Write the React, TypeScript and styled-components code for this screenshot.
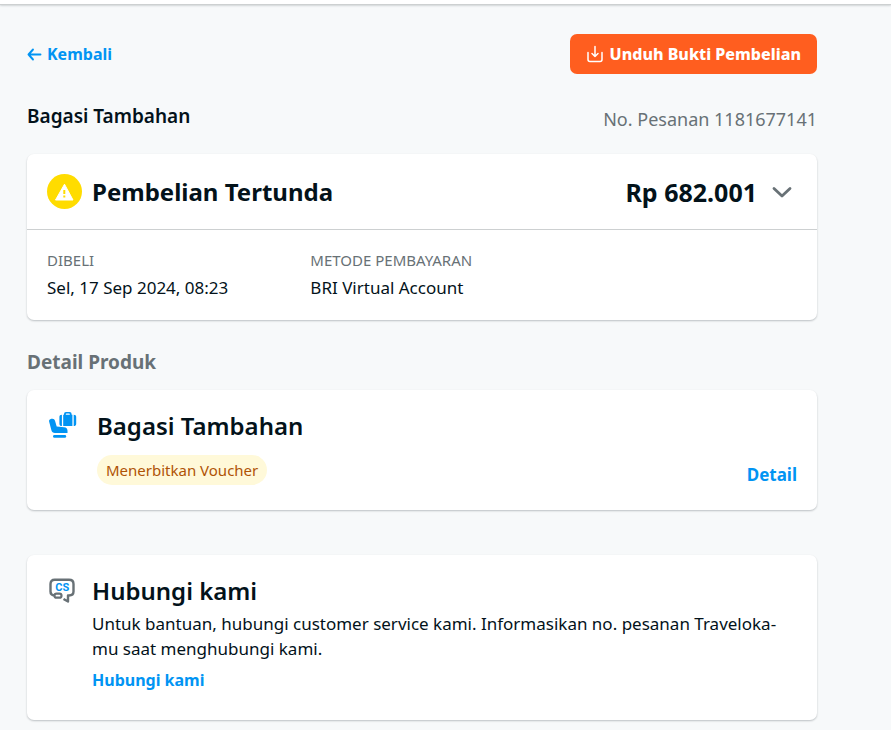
import React from "react";
import styled, { createGlobalStyle } from "styled-components";

const GlobalStyle = createGlobalStyle`
  * { box-sizing: border-box; }
  body {
    margin: 0;
    background: #f7f9fa;
    color: #03121a;
    font-family: "Noto Sans", "Open Sans", sans-serif;
    font-size: 17px;
    line-height: 24px;
  }
  h1, h2, h3, p, dl, dt, dd { margin: 0; }
  svg { display: block; flex: none; }
`;

const TopBar = styled.header`
  height: 5px;
  background: #fff;
  border-bottom: 1px solid #cdd0d1;
  box-shadow: 0 1px 2px rgba(3, 18, 26, 0.15);
`;

const Page = styled.main`
  padding: 29px 74px 10px 27px;
`;

const Row = styled.div`
  display: flex;
  align-items: center;
  justify-content: space-between;
`;

const Link = styled.a`
  display: inline-flex;
  align-items: center;
  gap: 4px;
  color: #0194f3;
  font-size: 16px;
  font-weight: 700;
  text-decoration: none;
`;

const DownloadButton = styled.button`
  display: flex;
  align-items: center;
  gap: 6px;
  height: 40px;
  padding: 0 16px;
  border: 0;
  border-radius: 7px;
  background: #ff5e1f;
  color: #fff;
  font: 800 16px/24px "Noto Sans", "Open Sans", sans-serif;
  cursor: pointer;
`;

const OrderRow = styled(Row)`
  align-items: flex-start;
  margin-top: 28px;
  height: 32px;
`;

const Heading = styled.h1`
  font-size: 19px;
  line-height: 28px;
  font-weight: 600;
`;

const OrderNumber = styled.p`
  padding-top: 3px;
  color: #687176;
  font-size: 18px;
  line-height: 28px;
`;

const SectionTitle = styled.h2`
  margin: 28px 0 14px;
  color: #687176;
  font-size: 19px;
  line-height: 28px;
  font-weight: 700;
`;

const Card = styled.section`
  border-radius: 7px;
  background: #fff;
  box-shadow: 0 1px 2px rgba(3, 18, 26, 0.24);
`;

const PaymentCard = styled(Card)`
  margin-top: 20px;
`;

const CardTitle = styled.h2<{ $strong?: boolean }>`
  font-size: 24px;
  line-height: 32px;
  font-weight: ${(p) => (p.$strong ? 700 : 600)};
`;

const StatusHeader = styled(Row)`
  height: 76px;
  padding: 0 20px;
  border-bottom: 1px solid #cdd0d1;
`;

const Status = styled.div`
  display: flex;
  align-items: center;
  gap: 10px;
`;

const PriceToggle = styled.button`
  display: flex;
  align-items: center;
  gap: 10px;
  padding: 0;
  border: 0;
  background: none;
  color: inherit;
  font: 700 25px/32px "Noto Sans", "Open Sans", sans-serif;
  cursor: pointer;
`;

const Facts = styled.dl`
  display: grid;
  grid-template-columns: 1fr 2fr;
  column-gap: 20px;
  padding: 20px 20px 18px;
`;

const FactLabel = styled.dt`
  color: #687176;
  font-size: 15px;
  line-height: 20px;
`;

const FactValue = styled.dd`
  padding-top: 4px;
  line-height: 28px;
`;

const ProductCard = styled(Card)`
  display: flex;
  gap: 20px;
  padding: 20px 20px 23px;
`;

const ProductBody = styled.div`
  flex: 1;
  padding-bottom: 2px;
`;

const Badge = styled.span`
  display: inline-block;
  margin-top: 13px;
  padding: 0 9px;
  border-radius: 15px;
  background: #fff9d9;
  color: #af5305;
  font-size: 15px;
  line-height: 30px;
`;

const DetailLink = styled(Link)`
  align-self: flex-end;
  font-size: 17px;
`;

const ContactCard = styled(Card)`
  display: flex;
  gap: 15px;
  margin-top: 45px;
  padding: 20px 20px 28px;
`;

const ContactText = styled.p`
  margin: 4px 0 7px;
  padding-right: 12px;
  line-height: 25px;
`;

const BackIcon = () => (
  <svg width="16" height="16" viewBox="0 0 16 16" fill="none" stroke="#0194f3" strokeWidth="1.9" strokeLinecap="round" strokeLinejoin="round" aria-hidden="true">
    <path d="M6 3.5 1.5 8.5 6 13.5M1.5 8.5H13.5" />
  </svg>
);

const DownloadIcon = () => (
  <svg width="18" height="18" viewBox="0 0 18 18" fill="none" stroke="#fff" strokeWidth="1.5" strokeLinecap="round" strokeLinejoin="round" aria-hidden="true">
    <path d="M2 7.5V14.5Q2 16.5 4 16.5H14Q16 16.5 16 14.5V7.5M9 1.5V11.5M6 8.5 9 11.5 12 8.5" />
  </svg>
);

const WarningIcon = () => (
  <svg width="35" height="35" viewBox="0 0 35 35" aria-hidden="true">
    <circle cx="17.5" cy="17.5" r="17.5" fill="#ffdc00" />
    <path d="M17.5 10.2 26 26H8.5Z" fill="#fff" stroke="#fff" strokeWidth="1" strokeLinejoin="round" />
    <path d="M17.3 16V20M17.3 21.5V23.5" stroke="#ffdc00" strokeWidth="2" />
  </svg>
);

const ChevronIcon = () => (
  <svg width="30" height="24" viewBox="0 0 30 24" fill="none" stroke="#687176" strokeWidth="2.8" strokeLinecap="round" strokeLinejoin="round" aria-hidden="true">
    <path d="M7 8.5 15 16 23 8.5" />
  </svg>
);

const BaggageIcon = () => (
  <svg width="30" height="30" viewBox="0 0 30 30" fill="#0194f3" aria-hidden="true">
    <path d="M4.3 8.8C6.2 8.3 7.5 9 8 10.8L9.7 16.6 17 17.3C19.4 17.5 20.5 18.9 20.5 20.8V23H8C6 23 4.9 22 4.4 20.2L2.1 11.6C1.8 10.2 2.8 9.2 4.3 8.8Z" />
    <rect x="6" y="25" width="13.2" height="2.8" rx="1.4" />
    <path d="M14.9 4.8V16C13.3 16 12.4 15.2 12.4 13.7V7C12.4 5.5 13.3 4.8 14.9 4.8ZM26.7 4.8V16C28.3 16 29.2 15.2 29.2 13.7V7C29.2 5.5 28.3 4.8 26.7 4.8Z" />
    <path fillRule="evenodd" d="M16.2 4.8H17V4Q17 2 19 2H22.6Q24.6 2 24.6 4V4.8H25.4V16H16.2ZM18.8 4.8H22.8V4.3Q22.8 3.6 22.1 3.6H19.5Q18.8 3.6 18.8 4.3Z" />
  </svg>
);

const ServiceIcon = () => (
  <svg width="30" height="30" viewBox="0 0 30 30" fill="none" aria-hidden="true">
    <path d="M7 20.5Q3.5 20 3.5 16.5V9Q3.5 4.8 7.7 4.8H22Q26.5 4.8 26.5 9V16.5Q26.5 20.5 22 20.5H21V26.5L16.5 24" stroke="#687176" strokeWidth="2.4" strokeLinejoin="round" />
    <rect x="7.5" y="18.7" width="7" height="4" rx="2" stroke="#687176" strokeWidth="2.2" />
    <text x="15.2" y="16.3" textAnchor="middle" fill="#0194f3" fontFamily="Roboto, sans-serif" fontSize="11" fontWeight="700">CS</text>
  </svg>
);

export default function App() {
  return (
    <>
      <GlobalStyle />
      <TopBar />
      <Page>
        <Row>
          <Link href="#kembali"><BackIcon />Kembali</Link>
          <DownloadButton type="button"><DownloadIcon />Unduh Bukti Pembelian</DownloadButton>
        </Row>
        <OrderRow>
          <Heading>Bagasi Tambahan</Heading>
          <OrderNumber>No. Pesanan 1181677141</OrderNumber>
        </OrderRow>
        <PaymentCard>
          <StatusHeader>
            <Status><WarningIcon /><CardTitle $strong>Pembelian Tertunda</CardTitle></Status>
            <PriceToggle type="button" aria-expanded="false">Rp 682.001<ChevronIcon /></PriceToggle>
          </StatusHeader>
          <Facts>
            <div>
              <FactLabel>DIBELI</FactLabel>
              <FactValue>Sel, 17 Sep 2024, 08:23</FactValue>
            </div>
            <div>
              <FactLabel>METODE PEMBAYARAN</FactLabel>
              <FactValue>BRI Virtual Account</FactValue>
            </div>
          </Facts>
        </PaymentCard>
        <SectionTitle>Detail Produk</SectionTitle>
        <ProductCard>
          <BaggageIcon />
          <ProductBody>
            <CardTitle>Bagasi Tambahan</CardTitle>
            <Badge>Menerbitkan Voucher</Badge>
          </ProductBody>
          <DetailLink href="#detail">Detail</DetailLink>
        </ProductCard>
        <ContactCard>
          <ServiceIcon />
          <div>
            <CardTitle>Hubungi kami</CardTitle>
            <ContactText>Untuk bantuan, hubungi customer service kami. Informasikan no. pesanan Traveloka-mu saat menghubungi kami.</ContactText>
            <Link href="#hubungi">Hubungi kami</Link>
          </div>
        </ContactCard>
      </Page>
    </>
  );
}
